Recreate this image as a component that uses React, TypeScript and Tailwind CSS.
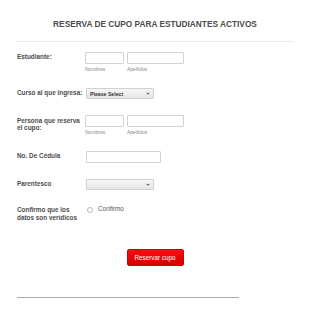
export default function App() {
  const labelCls = 'w-[69px] shrink-0 pl-[17px] box-content text-[6.4px] leading-[8px] font-bold text-[#4d4d4d] whitespace-nowrap';
  const inputCls = 'h-[12px] border border-[#d3d3d3] rounded-[1px] bg-white';
  const subCls = 'mt-[2px] text-[5px] leading-[6px] text-[#8a8a8a]';

  return (
    <div className="w-[310px] h-[333px] bg-white font-['Liberation_Sans',Arial,sans-serif] text-[#555]">
      {/* Title */}
      <div className="pt-[19px] text-center text-[8.3px] leading-[10px] font-bold text-[#4a4a4a]">
        RESERVA DE CUPO PARA ESTUDIANTES ACTIVOS
      </div>
      <div className="mx-[16px] mt-[12px] border-t border-[#ececec]" />

      {/* Estudiante */}
      <div className="mt-[10px] h-[36px] flex items-start">
        <div className="w-[68px] shrink-0 pl-[17px] box-content mt-[1px] text-[6.4px] leading-[8px] font-bold text-[#4d4d4d] whitespace-nowrap">
          Estudiante:
        </div>
        <div className="flex gap-[3px]">
          <div>
            <div className={`${inputCls} w-[39px]`} />
            <div className={subCls}>Nombres</div>
          </div>
          <div>
            <div className={`${inputCls} w-[57px]`} />
            <div className={subCls}>Apellidos</div>
          </div>
        </div>
      </div>

      {/* Curso */}
      <div className="h-[27px] flex items-start">
        <div className={`${labelCls} mt-[1px]`}>Curso al que ingresa:</div>
        <div className="w-[68px] h-[11px] border border-[#d0d0d0] rounded-[1px] bg-gradient-to-b from-[#f6f6f6] to-[#e6e6e6] flex items-center justify-between pl-[3px] pr-[3px]">
          <span className="text-[5.2px] leading-[6px] font-bold text-[#333]">Please Select</span>
          <Chevron />
        </div>
      </div>

      {/* Persona */}
      <div className="h-[36px] flex items-start">
        <div className="w-[68px] shrink-0 pl-[17px] box-content mt-[1.5px] text-[6.4px] leading-[7px] font-bold text-[#4d4d4d]">
          Persona que reserva
          <br />
          el cupo:
        </div>
        <div className="flex gap-[3px]">
          <div>
            <div className={`${inputCls} w-[39px]`} />
            <div className={subCls}>Nombres</div>
          </div>
          <div>
            <div className={`${inputCls} w-[57px]`} />
            <div className={subCls}>Apellidos</div>
          </div>
        </div>
      </div>

      {/* Cédula */}
      <div className="h-[28px] flex items-start">
        <div className={`${labelCls} mt-[1px]`}>No. De Cédula</div>
        <div className={`${inputCls} w-[75px]`} />
      </div>

      {/* Parentesco */}
      <div className="h-[27px] flex items-start">
        <div className={`${labelCls} mt-[1px]`}>Parentesco</div>
        <div className="w-[68px] h-[11px] border border-[#d0d0d0] rounded-[1px] bg-gradient-to-b from-[#f6f6f6] to-[#e6e6e6] flex items-center justify-end pr-[3px]">
          <Chevron />
        </div>
      </div>

      {/* Confirmo */}
      <div className="h-[43px] flex items-start">
        <div className={labelCls}>
          Confirmo que los
          <br />
          datos son verídicos
        </div>
        <div className="flex items-center gap-[5px] ml-[1px]">
          <div className="w-[6px] h-[6px] rounded-full border border-[#b5b5b5] bg-white mt-[1px]" />
          <span className="text-[6.4px] leading-[8px] text-[#555] -mt-[1px]">Confirmo</span>
        </div>
      </div>

      {/* Submit */}
      <div className="flex justify-center">
        <button className="w-[57px] h-[17px] rounded-[2px] bg-gradient-to-b from-[#f21010] to-[#d80000] border border-[#cc0000] text-white text-[6.3px] leading-[8px] font-['Liberation_Sans',Arial,sans-serif]">
          Reservar cupo
        </button>
      </div>

      <div className="ml-[17px] w-[222px] mt-[31px] border-t border-[#ababab]" />
    </div>
  );
}

function Chevron() {
  return (
    <svg width="4" height="3" viewBox="0 0 8 6" className="shrink-0">
      <path d="M1 1.5 L4 4.5 L7 1.5" fill="none" stroke="#333" strokeWidth="1.8" />
    </svg>
  );
}
